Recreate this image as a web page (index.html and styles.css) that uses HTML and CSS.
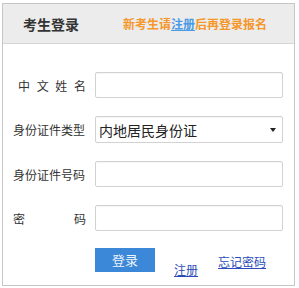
FILE: index.html
```html
<!DOCTYPE html>
<html lang="zh-CN">
<head>
  <meta charset="UTF-8">
  <title>考生登录</title>
  <link rel="stylesheet" href="styles.css">
</head>
<body>
<!-- 登录框 -->
<div class="login-box">
  <header class="login-header">
    <h1 class="login-title">考生登录</h1>
    <p class="login-tip">新考生请<a href="#" class="tip-link">注册</a>后再登录报名</p>
  </header>
  <form class="login-form">
    <div class="form-row">
      <label class="form-label label-name">中文姓名</label>
      <input type="text" class="form-input">
    </div>
    <div class="form-row">
      <label class="form-label">身份证件类型</label>
      <div class="select-wrap">
        <select class="form-input form-select">
          <option>内地居民身份证</option>
        </select>
        <span class="select-arrow"></span>
      </div>
    </div>
    <div class="form-row">
      <label class="form-label">身份证件号码</label>
      <input type="text" class="form-input">
    </div>
    <div class="form-row">
      <label class="form-label label-justify">密码</label>
      <input type="password" class="form-input">
    </div>
    <div class="form-actions">
      <button type="button" class="btn-login">登录</button>
      <a href="#" class="action-link link-register">注册</a>
      <a href="#" class="action-link link-forgot">忘记密码</a>
    </div>
  </form>
</div>
</body>
</html>
```

FILE: styles.css
```css
/* 基本设置 */
html, body {
  margin: 0;
  padding: 0;
  background: #ffffff;
}

body {
  padding: 3px 0 0 2px;
  font-family: "Noto Sans CJK SC", "Liberation Sans", sans-serif;
  color: #333333;
}

.login-box {
  width: 291px;
  height: 281px;
  border: 1px solid #c6c6c6;
}

/* 标题栏 */
.login-header {
  display: flex;
  align-items: center;
  height: 39px;
  background: #ececec;
  border-bottom: 1px solid #d6d6d6;
  padding-left: 20px;
}

.login-title {
  margin: 0;
  font-size: 14px;
  font-weight: bold;
  color: #333333;
  width: 100px;
}

.login-tip {
  margin: 0;
  font-size: 12px;
  font-weight: bold;
  color: #f5972b;
}

.tip-link {
  color: #4a9ae6;
  text-decoration: underline;
}

/* 表单 */
.login-form {
  padding: 28px 0 0 10px;
}

.form-row {
  display: flex;
  align-items: center;
  margin-bottom: 18px;
}

.form-label {
  width: 73px;
  margin-right: 9px;
  font-size: 12px;
  color: #333333;
  white-space: nowrap;
}

.label-name {
  box-sizing: border-box;
  padding-left: 5px;
  text-align: justify;
  text-align-last: justify;
}

.label-justify {
  text-align: justify;
  text-align-last: justify;
}

.form-input {
  box-sizing: border-box;
  width: 188px;
  height: 26px;
  margin: 0;
  border: 1px solid #d2d2d2;
  border-radius: 2px;
  background: #ffffff;
  box-shadow: inset 0 1px 1px rgba(0, 0, 0, 0.04);
  font-family: inherit;
}

.select-wrap {
  position: relative;
}

.form-select {
  -webkit-appearance: none;
  appearance: none;
  height: 27px;
  padding: 0 0 0 3px;
  font-size: 14px;
  color: #222222;
}

.select-arrow {
  position: absolute;
  right: 7px;
  top: 12px;
  width: 0;
  height: 0;
  border-left: 3.5px solid transparent;
  border-right: 3.5px solid transparent;
  border-top: 4px solid #222222;
}

/* 按钮和链接 */
.form-actions {
  display: flex;
  align-items: flex-start;
  padding-left: 82px;
  margin-top: -1px;
}

.btn-login {
  width: 60px;
  height: 24px;
  padding: 0 0 2px 0;
  border: none;
  background: #3b87d8;
  color: #eef4fb;
  font-family: inherit;
  font-size: 13px;
}

.action-link {
  font-size: 12px;
  color: #2a4bb9;
  text-decoration: underline;
}

.link-register {
  margin: 13px 0 0 19px;
}

.link-forgot {
  margin: 5px 0 0 20px;
}
```
